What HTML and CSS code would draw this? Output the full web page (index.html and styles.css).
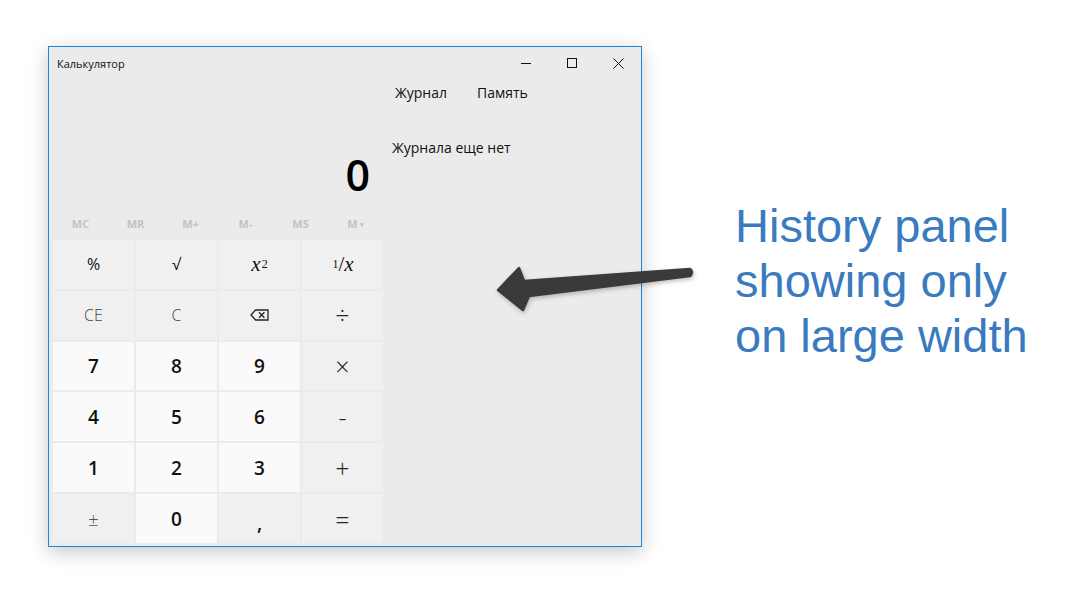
FILE: index.html
```html
<!DOCTYPE html>
<html lang="ru">
<head>
<meta charset="utf-8">
<title>Калькулятор</title>
<link rel="stylesheet" href="styles.css">
</head>
<body>
<div class="desktop">
  <div class="window">
    <div class="titlebar">
      <div class="title">Калькулятор</div>
      <div class="ctrl">
        <svg width="10" height="10" viewBox="0 0 10 10"><path d="M0 5.5H10" stroke="#111" stroke-width="1"/></svg>
      </div>
      <div class="ctrl">
        <svg width="10" height="10" viewBox="0 0 10 10"><rect x="0.5" y="0.5" width="9" height="9" fill="none" stroke="#111" stroke-width="1"/></svg>
      </div>
      <div class="ctrl">
        <svg width="11" height="11" viewBox="0 0 11 11"><path d="M0.5 0.5L10.5 10.5M10.5 0.5L0.5 10.5" stroke="#111" stroke-width="1"/></svg>
      </div>
    </div>
    <div class="body">
      <div class="calc">
        <div class="display"><span class="result">0</span></div>
        <div class="memory">
          <span>MC</span><span>MR</span><span>M+</span><span>M-</span><span>MS</span><span>M<small>▾</small></span>
        </div>
        <div class="keys">
          <div class="key op">%</div>
          <div class="key op">√</div>
          <div class="key op math"><i>x</i><sup>2</sup></div>
          <div class="key op math"><sup>1</sup>/<i>x</i></div>
          <div class="key op light">CE</div>
          <div class="key op light">C</div>
          <div class="key op">
            <svg width="19" height="12" viewBox="0 0 19 12"><path d="M1 6L5.6 1H18V11H5.6Z" fill="none" stroke="#222" stroke-width="1.3" stroke-linejoin="miter"/><path d="M9 3.3L14.4 8.7M14.4 3.3L9 8.7" stroke="#222" stroke-width="1.3"/></svg>
          </div>
          <div class="key op sym">÷</div>
          <div class="key num">7</div>
          <div class="key num">8</div>
          <div class="key num">9</div>
          <div class="key op sym">×</div>
          <div class="key num">4</div>
          <div class="key num">5</div>
          <div class="key num">6</div>
          <div class="key op sym">-</div>
          <div class="key num">1</div>
          <div class="key num">2</div>
          <div class="key num">3</div>
          <div class="key op sym">+</div>
          <div class="key op light pm">±</div>
          <div class="key num">0</div>
          <div class="key op comma">,</div>
          <div class="key op sym">=</div>
        </div>
      </div>
      <div class="history">
        <div class="tabs"><span>Журнал</span><span>Память</span></div>
        <div class="empty">Журнала еще нет</div>
      </div>
    </div>
  </div>
</div>

<svg class="arrow" width="220" height="60" viewBox="490 258 220 60">
  <path d="M498 290 L519 268 L524 281 L690 269 Q694 272 690 276 L529 296 L523 310 Z" fill="#3a3a3a" stroke="#3a3a3a" stroke-width="2.5" stroke-linejoin="round"/>
</svg>

<div class="note">History panel<br>showing only<br>on large width</div>
</body>
</html>
```

FILE: styles.css
```css
html, body {
  margin: 0;
  padding: 0;
  background: #ffffff;
}

body {
  width: 1067px;
  height: 594px;
  position: relative;
  overflow: hidden;
  font-family: "Open Sans", "Noto Sans", sans-serif;
  color: #000;
}

.desktop {
  padding: 46px 0 0 48px;
}

.window {
  width: 594px;
  height: 501px;
  box-sizing: border-box;
  border: 1px solid #1e86d8;
  background: #ebebeb;
  display: flex;
  flex-direction: column;
  box-shadow: 0 5px 18px rgba(0, 0, 0, 0.22);
}

.titlebar {
  height: 32px;
  display: flex;
  align-items: center;
  flex: none;
}

.title {
  flex: 1;
  padding-left: 8px;
  font-size: 11px;
  color: #111;
}

.ctrl {
  width: 46px;
  height: 32px;
  display: flex;
  align-items: center;
  justify-content: center;
}

.body {
  flex: 1;
  display: flex;
  min-height: 0;
}

.calc {
  width: 330px;
  margin-left: 4px;
  padding-bottom: 3px;
  display: flex;
  flex-direction: column;
}

.display {
  height: 130px;
  display: flex;
  align-items: flex-end;
  justify-content: flex-end;
  padding-right: 13px;
  padding-bottom: 13px;
  box-sizing: border-box;
}

.result {
  font-size: 43px;
  line-height: 1;
  font-weight: 600;
}

.memory {
  height: 29px;
  display: grid;
  grid-template-columns: repeat(6, 1fr);
  align-items: center;
  justify-items: center;
  font-size: 11px;
  font-weight: 700;
  color: #c3c3c3;
}

.memory small {
  font-size: 7px;
  margin-left: 2px;
  vertical-align: 1px;
}

.keys {
  margin-top: 2px;
  flex: 1;
  display: grid;
  grid-template-columns: repeat(4, 81px);
  grid-template-rows: repeat(6, 1fr);
  gap: 2px;
}

.key {
  display: flex;
  align-items: center;
  justify-content: center;
  font-size: 16px;
  color: #111;
}

.op {
  background: #f0f0f0;
}

.num {
  background: #fafafa;
  font-size: 19px;
  font-weight: 600;
}

.light {
  color: #444;
  font-weight: 300;
}

.pm {
  font-size: 18px;
  color: #555;
}

.sym {
  font-size: 25px;
  font-weight: 300;
  color: #222;
}

.comma {
  font-size: 19px;
  font-weight: 600;
  padding-top: 8px;
  box-sizing: border-box;
}

.math {
  font-family: "Liberation Serif", "DejaVu Serif", serif;
  font-size: 21px;
}

.math sup {
  font-size: 12px;
  font-style: normal;
  vertical-align: 9px;
  margin-left: 1px;
}

.math i {
  font-style: italic;
}

.history {
  flex: 1;
  padding-left: 9px;
  font-size: 14px;
  color: #111;
}

.tabs {
  display: flex;
  gap: 30px;
  padding: 4px 0 0 3px;
  height: 21px;
}

.empty {
  margin-top: 34px;
  font-size: 14px;
}

.arrow {
  position: absolute;
  left: 490px;
  top: 258px;
  filter: drop-shadow(1px 2px 2px rgba(0, 0, 0, 0.25));
}

.note {
  position: absolute;
  left: 735px;
  top: 198px;
  font-family: "Liberation Sans", Arial, sans-serif;
  font-size: 47px;
  line-height: 55px;
  color: #3a7abf;
}
```
